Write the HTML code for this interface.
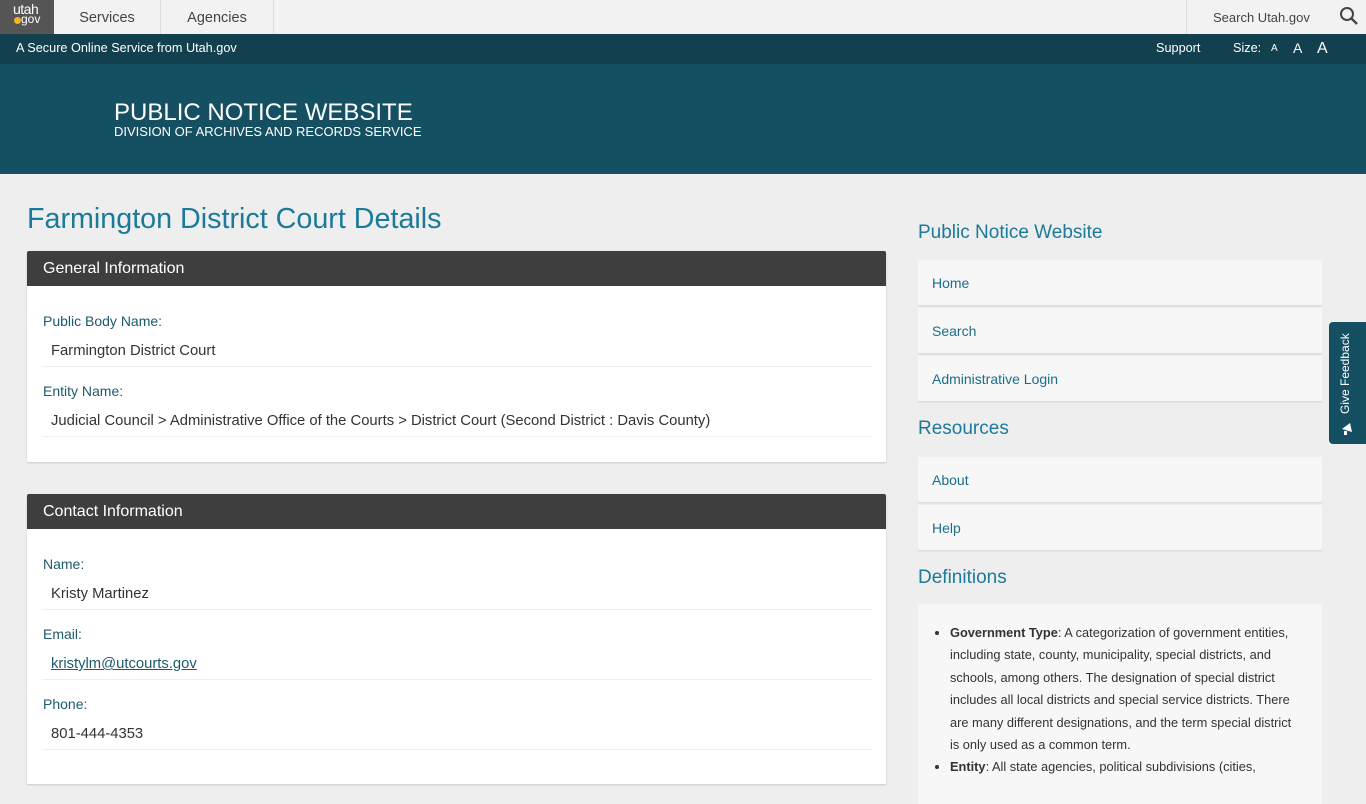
<!DOCTYPE html>
<html><head><meta charset="utf-8"><style>
*{box-sizing:border-box;margin:0;padding:0}
body{width:1366px;height:768px;overflow:hidden;background:#eeeeee;font-family:"Liberation Sans",Arial,sans-serif;position:relative;color:#333}
.top{position:absolute;top:0;left:0;width:1366px;height:34px;background:#f3f2f2}
.logo{position:absolute;left:0;top:0;width:54px;height:34px;background:#555}
.nav{position:absolute;top:0;height:34px;line-height:36px;font-size:14.5px;color:#444;text-align:center;border-right:1px solid #ddd}
.sec{position:absolute;top:34px;left:0;width:1366px;height:30px;background:#12404f;color:#fff;font-size:12.7px;line-height:29px}
.hdr{position:absolute;top:64px;left:0;width:1366px;height:110px;background:#144f62;color:#fff}
h1{position:absolute;left:27px;top:203px;font-size:28.7px;font-weight:normal;color:#1b7a99}
.card{position:absolute;left:27px;width:859px;background:#fff;box-shadow:0 1px 2px rgba(0,0,0,.15)}
.ch{height:35px;background:#3e3e3e;color:#fff;font-size:16px;line-height:36px;padding-left:16px;border-radius:2px 2px 0 0}
.lbl{font-size:14px;line-height:16px;color:#1d5a6b;margin-left:16px}
.val{font-size:14.8px;color:#333;margin:0 14px 16px 16px;padding:6px 8px 0;height:38px;line-height:32px;border-bottom:1px solid #eee}
.side h2{position:absolute;left:918px;font-size:19px;font-weight:normal;color:#1b7a99}
.li{position:absolute;left:918px;width:404px;height:46px;background:#f7f7f7;border-bottom:1px solid #ddd;box-shadow:0 1px 1px rgba(0,0,0,.05);font-size:14px;color:#1b6e8a;line-height:46px;padding-left:14px}
</style></head><body>
<div class="top">
<div class="logo"><div style="position:absolute;left:13px;top:3px;color:#fff;font-size:14px;line-height:12px;letter-spacing:-.5px">utah</div><div style="position:absolute;left:14px;top:17px;width:7px;height:7px;border-radius:50%;background:#f3b61f"></div><div style="position:absolute;left:21px;top:13px;color:#fff;font-size:12px;line-height:12px">gov</div></div>
<div class="nav" style="left:54px;width:107px">Services</div>
<div class="nav" style="left:161px;width:113px">Agencies</div>
<div style="position:absolute;left:1186px;top:0;height:34px;border-left:1px solid #ddd"></div>
<div style="position:absolute;left:1213px;top:10px;font-size:13px;color:#444">Search Utah.gov</div>
<svg style="position:absolute;left:1339px;top:6px" width="20" height="20" viewBox="0 0 20 20"><circle cx="8" cy="8" r="6" fill="none" stroke="#444" stroke-width="2"/><line x1="12.5" y1="12.5" x2="18" y2="18" stroke="#444" stroke-width="2.4"/></svg>
</div>
<div class="sec"><span style="position:absolute;left:16px">A Secure Online Service from Utah.gov</span>
<span style="position:absolute;left:1156px">Support</span><span style="position:absolute;left:1233px">Size:</span><span style="position:absolute;left:1271px;font-size:10px">A</span><span style="position:absolute;left:1293px;font-size:14px">A</span><span style="position:absolute;left:1317px;font-size:16px">A</span></div>
<div class="hdr"><div style="position:absolute;left:114px;top:35px;font-size:24px;line-height:28px">PUBLIC NOTICE WEBSITE</div><div style="position:absolute;left:114px;top:60px;font-size:13px">DIVISION OF ARCHIVES AND RECORDS SERVICE</div></div>
<h1>Farmington District Court Details</h1>
<div class="card" style="top:251px;height:211px"><div class="ch">General Information</div>
<div style="height:27px"></div><div class="lbl">Public Body Name:</div><div class="val">Farmington District Court</div>
<div class="lbl">Entity Name:</div><div class="val">Judicial Council &gt; Administrative Office of the Courts &gt; District Court (Second District : Davis County)</div></div>
<div class="card" style="top:494px;height:290px"><div class="ch">Contact Information</div>
<div style="height:27px"></div><div class="lbl">Name:</div><div class="val">Kristy Martinez</div>
<div class="lbl">Email:</div><div class="val"><span style="color:#1d5a6b;text-decoration:underline">kristylm@utcourts.gov</span></div>
<div class="lbl">Phone:</div><div class="val">801-444-4353</div></div>
<div class="side">
<h2 style="top:222px">Public Notice Website</h2>
<div class="li" style="top:260px">Home</div><div class="li" style="top:308px">Search</div><div class="li" style="top:356px">Administrative Login</div>
<h2 style="top:418px">Resources</h2>
<div class="li" style="top:457px">About</div><div class="li" style="top:505px">Help</div>
<h2 style="top:567px">Definitions</h2>
<div style="position:absolute;left:918px;top:604px;width:404px;height:200px;background:#f7f7f7;font-size:12.8px;line-height:22.4px;color:#333;padding:18px 20px 0 32px">
<ul style="padding-left:0"><li><b>Government Type</b>: A categorization of government entities, including state, county, municipality, special districts, and schools, among others. The designation of special district includes all local districts and special service districts. There are many different designations, and the term special district is only used as a common term.</li><li><b>Entity</b>: All state agencies, political subdivisions (cities,</li></ul></div>
</div>
<div style="position:absolute;left:1329px;top:322px;width:40px;height:122px;background:#154f62;border-radius:4px 0 0 4px">
<div style="position:absolute;left:9px;top:92px;transform:rotate(-90deg);transform-origin:0 0;color:#fff;font-size:12px;white-space:nowrap">Give Feedback</div>
<svg style="position:absolute;left:11px;top:98px" width="16" height="16" viewBox="0 0 16 16"><path d="M2 9 L10 3 L12 12 Z" fill="#fff"/><rect x="4" y="11" width="3" height="4" fill="#fff"/></svg></div>
</body></html>
